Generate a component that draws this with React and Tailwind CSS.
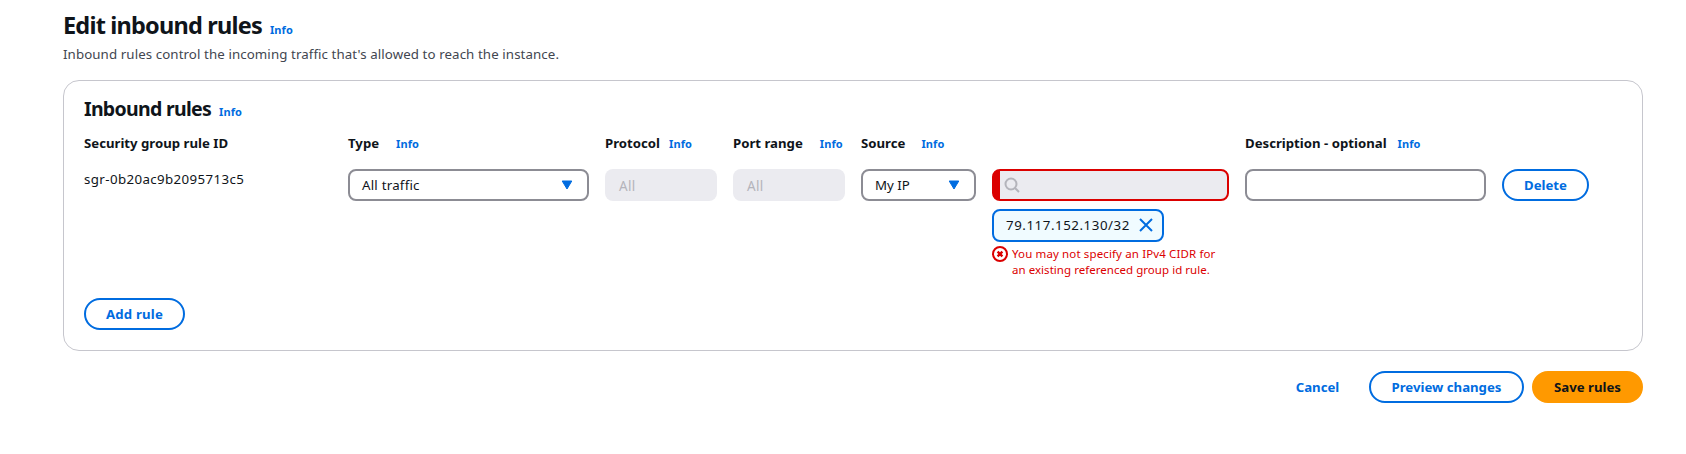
const bold = "text-[13.2px] font-bold leading-5 whitespace-nowrap";

function Info({ className = "" }) {
  return (
    <a className={`text-[11px] font-bold leading-4 tracking-[0.1px] text-[#006ce0] ${className}`}>Info</a>
  );
}

function Label({ children, width, infoGap }) {
  return (
    <div className={`flex shrink-0 items-baseline ${width}`}>
      <span className={bold}>{children}</span>
      {infoGap && <Info className={infoGap} />}
    </div>
  );
}

function Select({ children, width }) {
  return (
    <button
      className={`flex h-8 shrink-0 items-center justify-between rounded-lg border-2 border-[#8c8c94] bg-white pl-3 text-[13.3px] leading-5 ${width}`}
    >
      <span className="whitespace-nowrap">{children}</span>
      <svg width="12" height="10" viewBox="0 0 12 10" fill="#006ce0" stroke="#006ce0" strokeLinejoin="round">
        <path d="M1.2 1h9.6L6 9z" />
      </svg>
    </button>
  );
}

function Disabled() {
  return (
    <div className="mr-4 flex h-8 w-28 shrink-0 items-center rounded-lg bg-[#ebebf0] pt-0.5 pl-3.5 text-[13.5px] tracking-[0.3px] text-[#b4b4bb]">
      All
    </div>
  );
}

function Pill({ children, className }) {
  return (
    <button className={`flex h-8 shrink-0 items-center justify-center rounded-full border-2 ${bold} ${className}`}>
      {children}
    </button>
  );
}

export default function App() {
  return (
    <div className="h-[454px] bg-white pt-2 pr-[43px] pl-[63px] font-['Noto_Sans','Liberation_Sans',sans-serif] text-[#0f141a]">
      <div className="flex h-[34px] items-baseline">
        <h1 className="text-[23.5px] leading-[34px] font-bold tracking-[-0.8px]">Edit inbound rules</h1>
        <Info className="ml-2" />
      </div>
      <p className="pt-0.5 text-[13.3px] leading-5 tracking-[0.09px] text-[#424650]">
        Inbound rules control the incoming traffic that's allowed to reach the instance.
      </p>

      <section className="mt-4 h-[271px] rounded-2xl border border-[#c6c6cd] pt-3.5 pl-5">
        <div className="flex h-7 items-baseline">
          <h2 className="text-[19.5px] leading-7 font-bold tracking-[-0.7px]">Inbound rules</h2>
          <Info className="ml-2" />
        </div>

        <div className="mt-2.5 flex h-5">
          <Label width="w-[264px]">Security group rule ID</Label>
          <Label width="w-[257px]" infoGap="ml-[17px]">Type</Label>
          <Label width="w-32" infoGap="ml-[9px]">Protocol</Label>
          <Label width="w-32" infoGap="ml-[17px]">Port range</Label>
          <Label width="w-[384px]" infoGap="ml-4">Source</Label>
          <Label width="w-[240px]" infoGap="ml-[11px]">Description - optional</Label>
        </div>

        <div className="mt-4 flex items-start">
          <div className="w-[264px] shrink-0 text-[13.3px] leading-5 tracking-[0.39px]">sgr-0b20ac9b2095713c5</div>
          <Select width="mr-4 w-[241px] pr-3.5 tracking-[0.22px]">All traffic</Select>
          <Disabled />
          <Disabled />
          <Select width="mr-4 w-[115px] pr-3.5">My IP</Select>
          <div className="mr-4 w-[237px] shrink-0">
            <div className="flex h-8 items-center rounded-lg border-2 border-l-8 border-[#db0000] bg-[#ebebf0] pl-1">
              <svg width="16" height="16" viewBox="0 0 16 16" fill="none" stroke="#b4b4bb" strokeWidth="2">
                <circle cx="7" cy="7" r="5.5" />
                <path d="m11 11 4 4" />
              </svg>
            </div>
            <div className="mt-2 flex h-[33px] w-[172px] items-center rounded-lg border-2 border-[#006ce0] bg-[#f0fbff] pb-px pl-3">
              <span className="w-[125px] text-[13.3px] leading-5 tracking-[0.55px]">79.117.152.130/32</span>
              <svg className="ml-[7px]" width="16" height="16" viewBox="0 0 16 16" fill="none" stroke="#006ce0" strokeWidth="2">
                <path d="m2 2 12 12M14 2 2 14" />
              </svg>
            </div>
            <div className="mt-1 flex text-[11.5px] leading-4 text-[#db0000]">
              <svg className="mr-1 shrink-0" width="16" height="16" viewBox="0 0 16 16" fill="none" stroke="#db0000" strokeWidth="2">
                <circle cx="8" cy="8" r="7" />
                <path d="m5.6 5.6 4.8 4.8M10.4 5.6l-4.8 4.8" strokeWidth="2.3" />
              </svg>
              <p className="whitespace-nowrap">
                <span className="tracking-[0.13px]">You may not specify an IPv4 CIDR for</span>
                <br />
                <span className="tracking-[0.04px]">an existing referenced group id rule.</span>
              </p>
            </div>
          </div>
          <div className="mr-4 h-8 w-[241px] shrink-0 rounded-lg border-2 border-[#8c8c94]" />
          <Pill className="w-[87px] border-[#006ce0] text-[#006ce0]">Delete</Pill>
        </div>

        <Pill className="mt-5 w-[101px] border-[#006ce0] tracking-[0.2px] text-[#006ce0]">Add rule</Pill>
      </section>

      <div className="mt-5 flex justify-end">
        <Pill className="mr-2 w-[87px] border-transparent text-[#006ce0]">Cancel</Pill>
        <Pill className="mr-2 w-[155px] border-[#006ce0] text-[#006ce0]">Preview changes</Pill>
        <Pill className="w-[111px] border-[#ff9900] bg-[#ff9900]">Save rules</Pill>
      </div>
    </div>
  );
}
